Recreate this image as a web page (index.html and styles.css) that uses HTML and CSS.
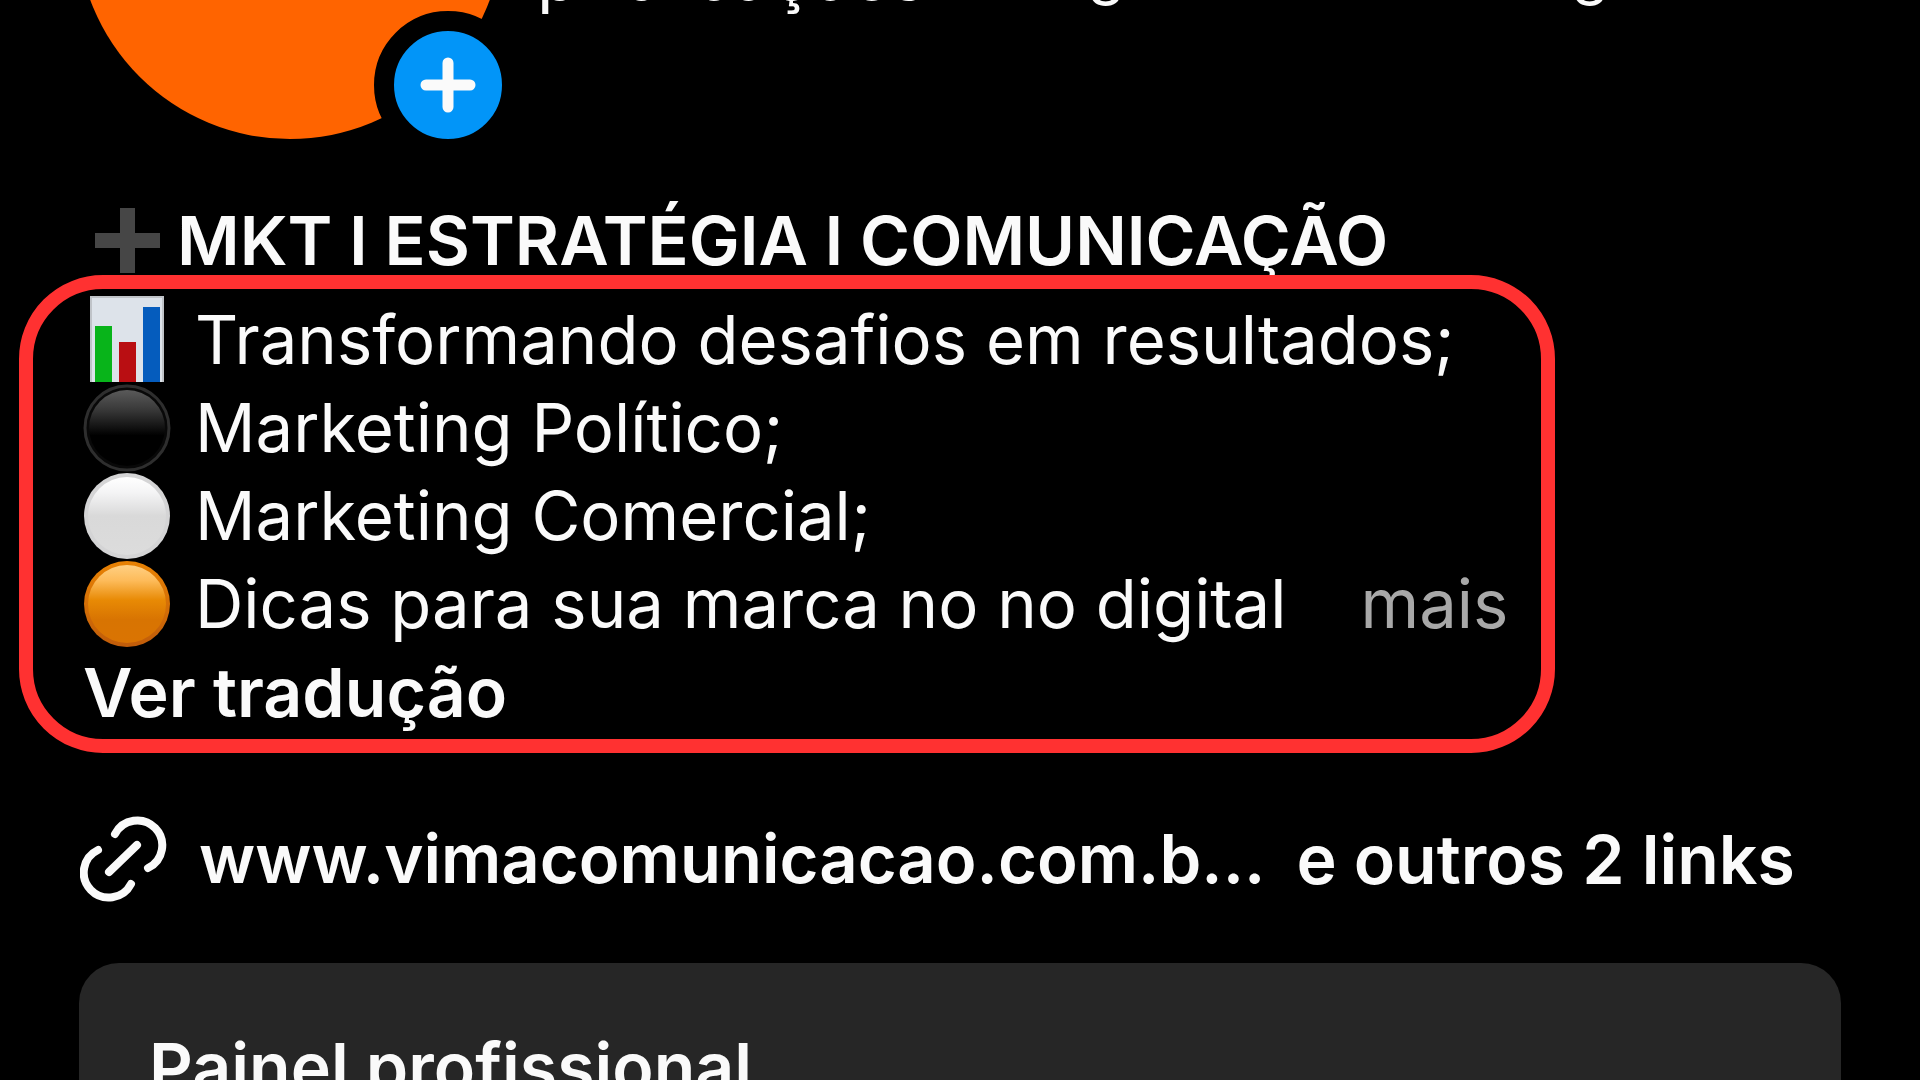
FILE: index.html
```html
<!DOCTYPE html>
<html lang="pt-BR">
<head>
  <meta charset="UTF-8">
  <meta name="viewport" content="width=device-width, initial-scale=1">
  <title>MKT | ESTRATÉGIA | COMUNICAÇÃO</title>
  <link rel="stylesheet" href="styles.css">
</head>
<body>
  <main class="profile">
    <header class="profile-header">
      <div class="avatar">
        <button class="avatar-add" type="button" aria-label="Adicionar">
          <svg viewBox="0 0 108 108" aria-hidden="true">
            <path d="M54 32v44M32 54h44"/>
          </svg>
        </button>
      </div>
      <div class="stats">
        <span class="stat stat-posts">publicações</span>
        <span class="stat">seguidores</span>
        <span class="stat">seguindo</span>
      </div>
    </header>

    <h1 class="name">
      <svg class="icon" viewBox="0 0 88 88" aria-hidden="true">
        <path fill="#464646" d="M37 12h15v25h25v15H52v25H37V52H12V37h25z"/>
      </svg>
      <span>MKT l ESTRATÉGIA l COMUNICAÇÃO</span>
    </h1>

    <section class="bio">
      <p class="bio-line">
        <svg class="icon" viewBox="0 0 88 88" aria-hidden="true">
          <path fill="#bfc3c8" d="M7 0h74v86H7z"/>
          <path fill="#dde3ea" d="M9 2h70v84H9z"/>
          <path fill="#08b41a" d="M12 30h17v56H12z"/>
          <path fill="#b90e12" d="M36 46h17v40H36z"/>
          <path fill="#055cbd" d="M60 11h17v75H60z"/>
        </svg>
        <span>Transformando desafios em resultados;</span>
      </p>
      <p class="bio-line">
        <svg class="icon" viewBox="0 0 88 88" aria-hidden="true">
          <defs>
            <linearGradient id="black" x1="0" y1="0" x2="0" y2="1">
              <stop offset="0" stop-color="#5a5a5a"/>
              <stop offset=".25" stop-color="#3a3a3a"/>
              <stop offset=".6" stop-color="#000"/>
            </linearGradient>
          </defs>
          <circle cx="44" cy="44" r="42" fill="#080808" stroke="#2e2e2e" stroke-width="3"/>
          <circle cx="44" cy="44" r="38" fill="url(#black)"/>
        </svg>
        <span>Marketing Político;</span>
      </p>
      <p class="bio-line">
        <svg class="icon" viewBox="0 0 88 88" aria-hidden="true">
          <defs>
            <linearGradient id="white" x1="0" y1="0" x2="0" y2="1">
              <stop offset="0" stop-color="#fff"/>
              <stop offset=".2" stop-color="#f4f4f5"/>
              <stop offset=".5" stop-color="#d9d9d9"/>
              <stop offset="1" stop-color="#dcdcdc"/>
            </linearGradient>
          </defs>
          <circle cx="44" cy="44" r="43" fill="#d4d4d5"/>
          <circle cx="44" cy="44" r="39" fill="url(#white)"/>
        </svg>
        <span>Marketing Comercial;</span>
      </p>
      <p class="bio-line">
        <svg class="icon" viewBox="0 0 88 88" aria-hidden="true">
          <defs>
            <linearGradient id="orange" x1="0" y1="0" x2="0" y2="1">
              <stop offset="0" stop-color="#ffd083"/>
              <stop offset=".2" stop-color="#fdbb5a"/>
              <stop offset=".45" stop-color="#e88a05"/>
              <stop offset=".7" stop-color="#d87402"/>
              <stop offset="1" stop-color="#da7402"/>
            </linearGradient>
            <linearGradient id="orange-rim" x1="0" y1="0" x2="0" y2="1">
              <stop offset="0" stop-color="#e88203"/>
              <stop offset="1" stop-color="#c05c0a"/>
            </linearGradient>
          </defs>
          <circle cx="44" cy="44" r="43" fill="url(#orange-rim)"/>
          <circle cx="44" cy="44" r="39" fill="url(#orange)"/>
        </svg>
        <span>Dicas para sua marca no no digital</span>
        <button class="more" type="button">mais</button>
      </p>
      <button class="translate" type="button">Ver tradução</button>
    </section>

    <div class="links">
      <svg class="icon link-icon" viewBox="0 0 88 88" aria-hidden="true">
        <path d="M35 19A25 25 0 1 1 68 53M18 35A25 25 0 1 0 51 69M29 57l28-27"/>
      </svg>
      <a class="link" href="#">www.vimacomunicacao.com.b...</a>
      <a class="link link-others" href="#">e outros 2 links</a>
    </div>

    <section class="panel">
      <h2 class="panel-title">Painel profissional</h2>
    </section>
  </main>
</body>
</html>
```
FILE: styles.css
```css
* {
  box-sizing: border-box;
}

body {
  margin: 0;
  background: #000;
  color: #fafafa;
  font-family: Inter, "Liberation Sans", sans-serif;
  font-size: 67px;
  line-height: 88px;
}

h1, h2, p {
  margin: 0;
  font-size: inherit;
}

button {
  padding: 0;
  border: none;
  background: none;
  color: inherit;
  font: inherit;
  cursor: pointer;
}

.profile {
  height: 100vh;
  overflow: hidden;
}

/* the header is scrolled mostly out of view */
.profile-header {
  display: flex;
  align-items: flex-end;
  gap: 34px;
  margin-top: -287px;
  padding-left: 77px;
}

.avatar {
  position: relative;
  width: 426px;
  height: 426px;
  border-radius: 50%;
  background: #ff6400;
}

.avatar-add {
  position: absolute;
  right: -19px;
  bottom: -20px;
  width: 148px;
  height: 148px;
  border: 20px solid #000;
  border-radius: 50%;
  background: #0295f8;
}

.avatar-add svg {
  display: block;
  fill: none;
  stroke: #fafafa;
  stroke-width: 11;
  stroke-linecap: round;
}

.stats {
  flex: 1;
  display: grid;
  grid-template-columns: repeat(3, 35%);
  padding-bottom: 120px;
}

.stat {
  font-size: 60px;
  line-height: 80px;
}

.stat-posts {
  font-size: 68px;
  line-height: 88px;
}

.icon {
  flex: none;
  width: 88px;
  height: 88px;
}

.name {
  display: flex;
  gap: 6px;
  margin-top: 57px;
  padding-left: 83px;
  font-size: 68px;
  font-weight: 600;
  white-space: nowrap;
}

.bio {
  width: 80%;
  margin-top: -9px;
  margin-left: 19px;
  padding: 7px 50px 3px;
  border: 14px solid #ff3131;
  border-radius: 84px;
  position: relative;
  white-space: nowrap;
}

.bio-line {
  display: flex;
  gap: 24px;
}

.more {
  margin-left: 50px;
  color: #a8a8a8;
}

.translate {
  display: block;
  font-size: 68px;
  font-weight: 600;
}

.links {
  display: flex;
  gap: 31px;
  margin-top: 62px;
  padding-left: 80px;
  white-space: nowrap;
}

.link-icon {
  fill: none;
  stroke: #fafafa;
  stroke-width: 8;
  stroke-linecap: round;
}

.link {
  color: inherit;
  font-weight: 600;
  text-decoration: none;
}

.link-others {
  font-size: 68px;
}

.panel {
  min-height: 240px;
  margin: 60px 79px 0;
  padding: 60px 70px;
  border-radius: 40px;
  background: #262626;
}

.panel-title {
  font-size: 68px;
  font-weight: 600;
}
```
